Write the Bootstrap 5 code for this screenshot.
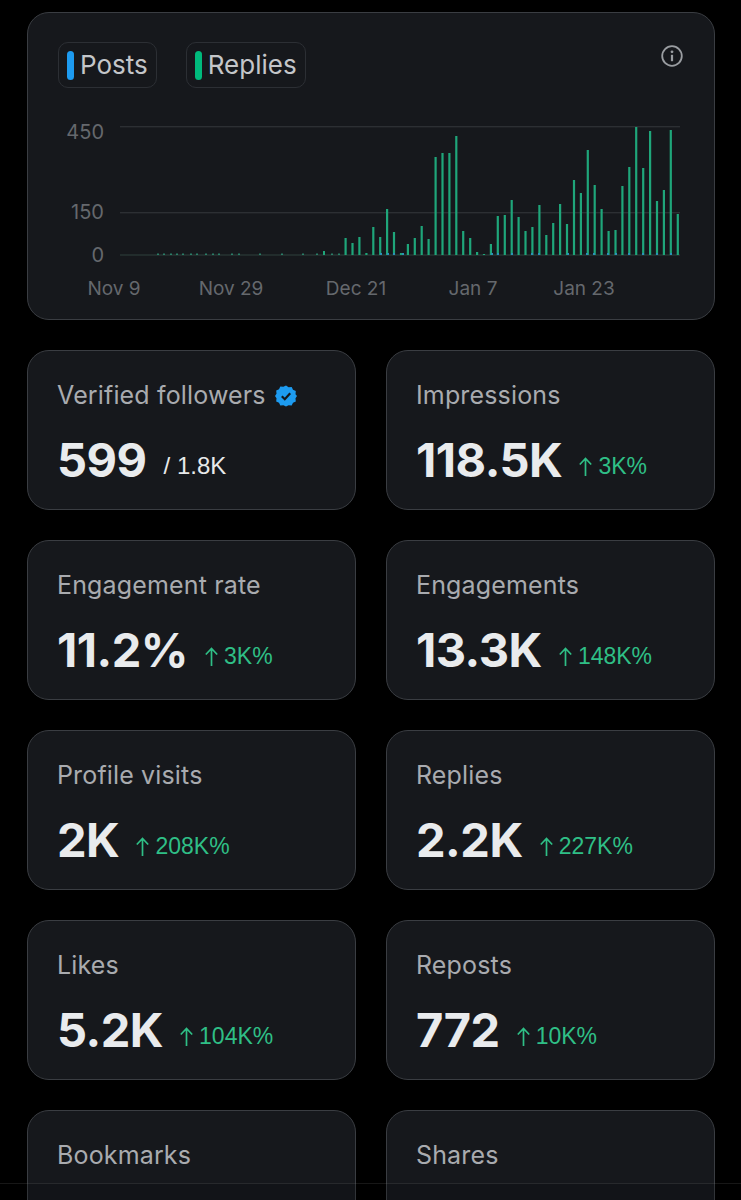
<!DOCTYPE html>
<html lang="en">
<head>
    <meta charset="UTF-8">
    <meta name="viewport" content="width=device-width, initial-scale=1.0">
    <title>Account overview</title>
    <link href="https://cdn.jsdelivr.net/npm/bootstrap@5.3.0/dist/css/bootstrap.min.css" rel="stylesheet">
    <style>
        html, body { height: 1200px; overflow: hidden; }
        body { background: #000; font-family: Inter, "Liberation Sans", sans-serif; }
        .page-wrap { padding: 12px 26px 0 27px; }
        .panel-box { background: #16181c; border: 1px solid #3a3d42; border-radius: 22px; }
        .chart-box { height: 308px; padding: 29px 30px 0 30px; }
        .legend-pill { height: 46px; padding: 0 8px 2px 8px; border: 1px solid #2c2f34; border-radius: 10px; color: #c4c6c9; font-size: 26px; gap: 6px; }
        .legend-mark { width: 7px; height: 29px; border-radius: 4px; margin-top: 2px; }
        .mark-posts { background: #1d9bf0; }
        .mark-replies { background: #00ba7c; }
        .legend-row { gap: 29px; }
        .info-icon { margin-top: 3px; margin-right: 1px; }
        .chart-svg { display: block; margin: 0 0 0 -30px; }
        .chart-svg text { font-family: Inter, "Liberation Sans", sans-serif; font-size: 20px; fill: #65686d; }
        .chart-svg text.x-tick { font-size: 19px; }
        .stat-grid { display: grid; grid-template-columns: 329px 329px; column-gap: 30px; row-gap: 30px; margin-top: 30px; }
        .stat-box { height: 160px; padding: 28px 30px 0 29px; }
        .stat-label { color: #a9abaf; font-size: 25px; letter-spacing: .15px; line-height: 33px; }
        .stat-value { color: #e9ebed; font-size: 47px; font-weight: 700; line-height: 56px; letter-spacing: -0.5px; }
        .stat-row { margin-top: 20px; }
        .stat-total { color: #e7e9ea; font-family: "Liberation Sans", sans-serif; font-size: 24px; line-height: 28px; margin-left: 17px; margin-bottom: 8px; }
        .stat-delta { color: #2fbf86; font-family: "Liberation Sans", sans-serif; font-size: 23px; line-height: 28px; margin-left: 17px; margin-bottom: 8px; gap: 6px; }
        .bottom-edge { position: absolute; left: 0; right: 0; top: 1183px; height: 17px; background: rgba(0, 0, 0, .14); border-top: 1px solid rgba(255, 255, 255, .09); }
    </style>
</head>
<body>
    <div class="page-wrap">
        <div class="panel-box chart-box">
            <div class="d-flex justify-content-between align-items-start">
                <div class="d-flex legend-row">
                    <div class="legend-pill d-flex align-items-center"><span class="legend-mark mark-posts"></span>Posts</div>
                    <div class="legend-pill d-flex align-items-center"><span class="legend-mark mark-replies"></span>Replies</div>
                </div>
                <svg class="info-icon" width="22" height="22" viewBox="0 0 22 22" fill="none">
                    <circle cx="11" cy="11" r="9.8" stroke="#9a9da1" stroke-width="1.8"/>
                    <circle cx="11" cy="6.8" r="1.4" fill="#9a9da1"/>
                    <rect x="9.9" y="9.8" width="2.2" height="6.4" fill="#9a9da1"/>
                </svg>
            </div>
            <svg id="chart" class="chart-svg" width="686" height="215" viewBox="0 0 686 215"></svg>
        </div>

        <div class="stat-grid" id="stats"></div>
    </div>
    <div class="bottom-edge"></div>

    <script src="https://cdn.jsdelivr.net/npm/bootstrap@5.3.0/dist/js/bootstrap.bundle.min.js"></script>
    <script>
        // chart origin: svg top sits at page y = 88, x = 28
        const top0 = 88, left0 = 28, baseY = 255 - top0;
        const chart = document.getElementById('chart');
        let out = '';

        function line(y) {
            out += `<rect x="${120 - left0}" y="${y - top0}" width="560" height="1.4" fill="#2c2f33"/>`;
        }
        line(126); line(212);
        out += `<rect x="${120 - left0}" y="${baseY - 0.6}" width="560" height="1.2" fill="#2b3a38"/>`;

        // heights of the reply bars, in px, first bar at x = 345 and one every 6.92px
        const heights = [17, 12, 18, 2, 28, 18, 46, 23, 2, 11, 17, 29, 16, 98, 102, 102, 119, 24, 17, 3, 1, 11, 39, 40, 55, 38, 24, 28, 50, 20, 32, 51, 31, 75, 62, 105, 70, 46, 24, 25, 69, 88, 128, 87, 124, 54, 65, 125, 41];
        heights.forEach(function (h, i) {
            const x = 344.5 + i * 6.92 - left0;
            out += `<rect x="${x.toFixed(1)}" y="${baseY - h}" width="2.2" height="${h}" fill="#1fa67a"/>`;
        });

        // posts: small blue stubs sitting on the baseline between the bars
        [380, 387, 393, 402, 491, 497, 511, 531, 538, 567, 586, 593, 607, 615, 628, 642, 656, 670].forEach(function (x) {
            out += `<rect x="${x - left0}" y="${baseY - 2}" width="2" height="2" fill="#2a93b8"/>`;
        });

        // tiny ticks before the chart takes off
        [157, 163, 170, 176, 182, 190, 196, 205, 212, 218, 231, 238, 259, 281, 302, 316, 331, 338].forEach(function (x) {
            out += `<rect x="${x - left0}" y="${baseY - 1.5}" width="2" height="1.5" fill="#2a7f68"/>`;
        });
        out += `<rect x="${323 - left0}" y="${baseY - 4}" width="2" height="4" fill="#1fa67a"/>`;

        // axis labels
        [['450', 139], ['150', 219], ['0', 262]].forEach(function (t) {
            out += `<text x="${104 - left0}" y="${t[1] - top0}" text-anchor="end">${t[0]}</text>`;
        });
        [['Nov 9', 114], ['Nov 29', 231], ['Dec 21', 356], ['Jan 7', 473], ['Jan 23', 584]].forEach(function (t) {
            out += `<text class="x-tick" x="${t[1] - left0}" y="${295 - top0}" text-anchor="middle">${t[0]}</text>`;
        });
        chart.innerHTML = out;

        // stat cards
        const badge = `<svg width="24" height="24" viewBox="0 0 24 24"><path fill="#1d9bf0" d="M12 1.5l2.6 1.7 3.1-.3 1.3 2.8 2.8 1.4-.3 3.1L23 12l-1.5 2.3.3 3.1-2.8 1.4-1.3 2.8-3.1-.3L12 22.5l-2.6-1.2-3.1.3-1.3-2.8-2.8-1.4.3-3.1L1 12l1.5-2.3-.3-3.1 2.8-1.4 1.3-2.8 3.1.3z"/><path fill="none" stroke="#14171a" stroke-width="2.2" d="M7.8 12.2l3 3 5.4-6"/></svg>`;
        const arrow = `<svg width="13" height="19" viewBox="0 0 13 19" fill="none" stroke="#2fbf86" stroke-width="1.7"><path d="M6.5 19V1.5M.8 7.5l5.7-6 5.7 6"/></svg>`;
        const stats = [
            ['Verified followers', '599', null, '/ 1.8K'],
            ['Impressions', '118.5K', '3K%'],
            ['Engagement rate', '11.2%', '3K%'],
            ['Engagements', '13.3K', '148K%'],
            ['Profile visits', '2K', '208K%'],
            ['Replies', '2.2K', '227K%'],
            ['Likes', '5.2K', '104K%'],
            ['Reposts', '772', '10K%'],
            ['Bookmarks'],
            ['Shares']
        ];
        document.getElementById('stats').innerHTML = stats.map(function (s) {
            let label = s[0] === 'Verified followers' ? s[0] + badge : s[0];
            let row = '';
            if (s[1]) {
                const side = s[3]
                    ? `<span class="stat-total">${s[3]}</span>`
                    : `<span class="stat-delta d-flex align-items-center">${arrow}${s[2]}</span>`;
                row = `<div class="stat-row d-flex align-items-end"><span class="stat-value">${s[1]}</span>${side}</div>`;
            }
            return `<div class="panel-box stat-box"><div class="stat-label d-flex align-items-center gap-2">${label}</div>${row}</div>`;
        }).join('');
    </script>
</body>
</html>
